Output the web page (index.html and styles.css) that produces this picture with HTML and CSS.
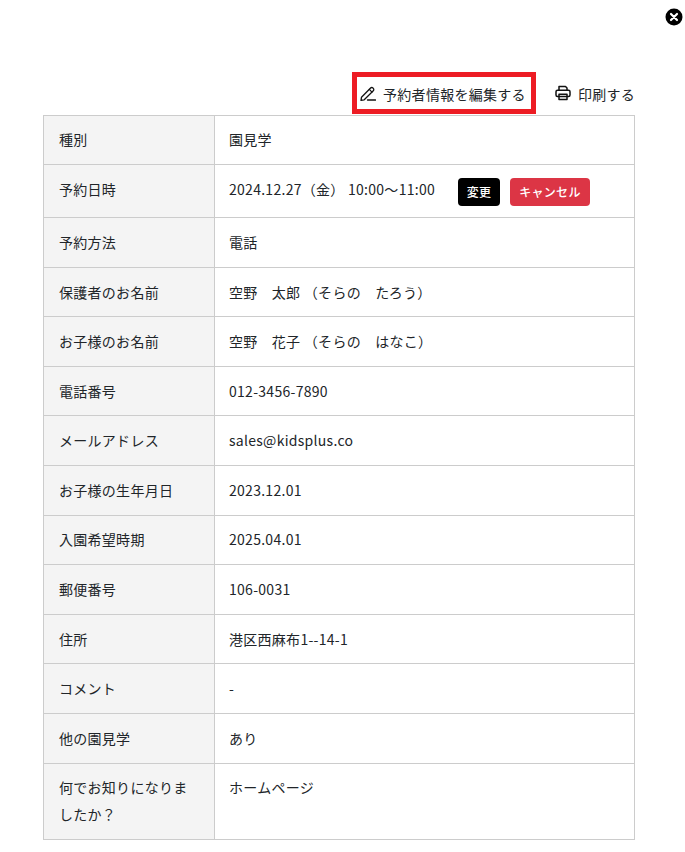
FILE: index.html
```html
<!DOCTYPE html>
<html lang="ja">
<head>
<meta charset="utf-8">
<title>予約詳細</title>
<link rel="stylesheet" href="styles.css">
</head>
<body>
<div class="modal">
  <button class="close" aria-label="閉じる">
    <svg viewBox="0 0 18 18" width="18" height="18"><circle cx="9" cy="9" r="8.5" fill="#000"/><path d="M6 6l6 6M12 6l-6 6" stroke="#fff" stroke-width="2.2" stroke-linecap="round"/></svg>
  </button>
  <div class="actions">
    <a class="action action-edit">
      <svg viewBox="0 0 16 16" width="16" height="16" fill="none" stroke="#111" stroke-width="1.3" stroke-linejoin="round" stroke-linecap="round"><path d="M1.5 12.2 10.6 3a1.6 1.6 0 0 1 2.3 0l.4.4a1.6 1.6 0 0 1 0 2.3L4.2 14.8l-3.2.5z"/><path d="M9.3 4.4 12 7.1"/><path d="M7.5 15h8"/></svg>
      <span>予約者情報を編集する</span>
    </a>
    <a class="action action-print">
      <svg viewBox="0 0 16 16" width="16" height="16" fill="none" stroke="#111" stroke-width="1.5" stroke-linejoin="round"><path d="M4 5V1.5h6.5L12 3v2"/><rect x="1" y="5.2" width="14" height="6.3" rx="1.5"/><rect x="4" y="9.2" width="8" height="5.3"/></svg>
      <span>印刷する</span>
    </a>
  </div>
  <table class="info">
    <tbody>
      <tr><th>種別</th><td>園見学</td></tr>
      <tr class="row-buttons"><th>予約日時</th><td><div class="when"><span>2024.12.27（金） 10:00〜11:00</span><span class="btn btn-dark">変更</span><span class="btn btn-red">キャンセル</span></div></td></tr>
      <tr><th>予約方法</th><td>電話</td></tr>
      <tr><th>保護者のお名前</th><td>空野　太郎 （そらの　たろう）</td></tr>
      <tr><th>お子様のお名前</th><td>空野　花子 （そらの　はなこ）</td></tr>
      <tr><th>電話番号</th><td>012-3456-7890</td></tr>
      <tr><th>メールアドレス</th><td>sales@kidsplus.co</td></tr>
      <tr><th>お子様の生年月日</th><td>2023.12.01</td></tr>
      <tr><th>入園希望時期</th><td>2025.04.01</td></tr>
      <tr><th>郵便番号</th><td>106-0031</td></tr>
      <tr><th>住所</th><td>港区西麻布1--14-1</td></tr>
      <tr><th>コメント</th><td>-</td></tr>
      <tr><th>他の園見学</th><td>あり</td></tr>
      <tr><th>何でお知りになりましたか？</th><td>ホームページ</td></tr>
    </tbody>
  </table>
</div>
</body>
</html>
```
FILE: styles.css
```css
* { box-sizing: border-box; }
html, body { margin: 0; padding: 0; background: #fff; }
body {
  font-family: "Noto Sans CJK JP", "Noto Sans", sans-serif;
  font-size: 14px;
  line-height: 26.6px;
  letter-spacing: 0.02em;
  color: #212529;
  overflow: hidden;
}
.modal { position: relative; padding: 72px 50px 0 43px; }
.close {
  position: absolute; top: 8px; right: 2px;
  width: 18px; height: 18px; padding: 0; border: 0; background: none; line-height: 0;
}
.actions { display: flex; justify-content: flex-end; align-items: center; gap: 19px; height: 42px; margin-bottom: 0.6px; }
.action { display: flex; align-items: center; gap: 7px; color: #212529; }
.action span { position: relative; top: 1px; }
.action-edit { height: 42px; border: 5px solid #ed1c24; padding: 0 5px 0 3px; }
.action-print { margin-right: 0; }
.info { width: 592px; table-layout: fixed; border-collapse: collapse; }
.info th, .info td { border: 1px solid #ccc; padding: 10.8px 15px 11.2px; text-align: left; vertical-align: top; font-weight: 400; }
.info td { padding-left: 14px; }
.info th { width: 171px; background: #f4f4f4; }
.row-buttons th, .row-buttons td { padding-top: 11px; padding-bottom: 13px; }
.when { display: flex; align-items: flex-start; }
.btn { display: inline-block; height: 28px; line-height: 28px; margin-top: 1.4px; margin-bottom: -1.4px; border-radius: 4px; color: #fff; font-size: 12px; font-weight: 500; padding: 0 9px; }
.btn-dark { background: #000; margin-left: 23px; padding: 0 8.7px; }
.btn-red { background: #dc3545; margin-left: 10px; padding: 0 9.3px; }
.info tr:last-child th, .info tr:last-child td { padding-bottom: 11.6px; }
```
